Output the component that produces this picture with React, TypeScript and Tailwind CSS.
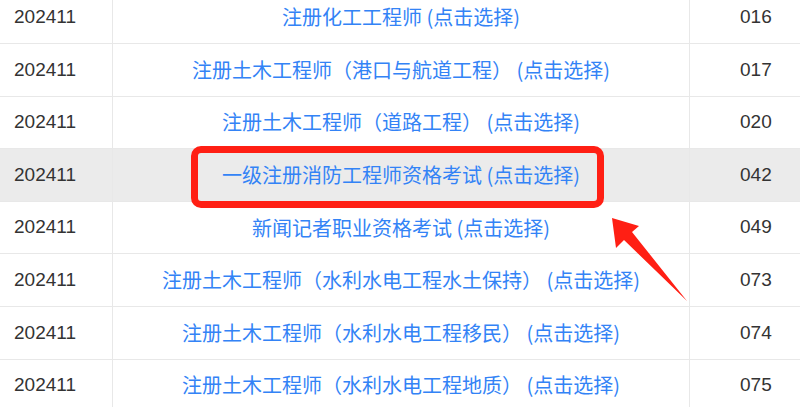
const rows = [
  { term: '202411', name: '注册化工工程师', code: '016' },
  { term: '202411', name: '注册土木工程师（港口与航道工程）', code: '017' },
  { term: '202411', name: '注册土木工程师（道路工程）', code: '020' },
  { term: '202411', name: '一级注册消防工程师资格考试', code: '042', active: true },
  { term: '202411', name: '新闻记者职业资格考试', code: '049' },
  { term: '202411', name: '注册土木工程师（水利水电工程水土保持）', code: '073' },
  { term: '202411', name: '注册土木工程师（水利水电工程移民）', code: '074' },
  { term: '202411', name: '注册土木工程师（水利水电工程地质）', code: '075' },
];

export default function App() {
  return (
    <div className="w-[800px] h-[416px] bg-white overflow-hidden">
      <div className="relative h-[407px] overflow-hidden">
        <div className="-mt-[8.6px]">
          {rows.map((r, i) => (
            <div
              key={i}
              className={`grid grid-cols-[113px_577px_1fr] h-[52.6px] border-b border-[#e8e8e8] ${r.active ? 'bg-[#ebebeb]' : 'bg-white'}`}
            >
              <div className="flex items-center pl-[14px] border-r border-[#e8e8e8] text-[19px] text-[#333] font-['Liberation_Sans',sans-serif]">
                {r.term}
              </div>
              <div className="flex items-center justify-center border-r border-[#e8e8e8] text-[20px] text-[#3383f6] font-['Noto_Sans_CJK_SC',sans-serif] whitespace-pre">
                {r.name.endsWith('）') ? r.name + '\u00a0(点击选择)' : r.name + ' (点击选择)'}
              </div>
              <div className="flex items-center pl-[50px] text-[19px] text-[#333] font-['Liberation_Sans',sans-serif]">
                {r.code}
              </div>
            </div>
          ))}
        </div>

        {/* annotation: red frame + arrow */}
        <div className="absolute left-[191px] top-[146px] w-[413px] h-[62px] border-[7px] border-[#ff1f14] rounded-[10px]"></div>
        <svg className="absolute left-0 top-0" width="800" height="416" viewBox="0 0 800 416">
          <polygon
            points="612,218 639,226 632,232 687,301 624,240 616,248"
            fill="#ff1f14"
          />
        </svg>
      </div>
    </div>
  );
}
